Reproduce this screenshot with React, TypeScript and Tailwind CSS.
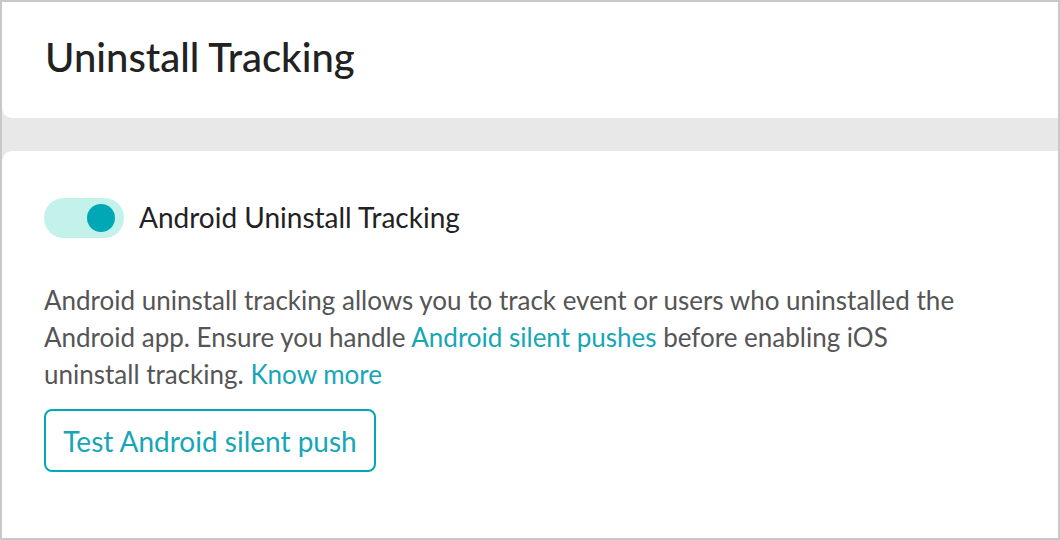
export default function App() {
  return (
    <div className="flex h-[540px] w-full flex-col overflow-hidden border-2 border-[#c8c8c8] bg-[#e8e8e8] font-['Lato',sans-serif]">
      <header className="flex h-[116px] shrink-0 items-center rounded-bl-[10px] bg-white pb-[6px] pl-[43px]">
        <h1 className="text-[40px] font-medium leading-none text-[#222222]">Uninstall Tracking</h1>
      </header>

      <section className="mt-[33px] flex-1 rounded-tl-[10px] bg-white pl-[42px] pt-[47px]">
        <div className="flex h-[40px] items-center gap-[15px]">
          <button
            type="button"
            aria-pressed="true"
            className="flex h-[40px] w-[80px] items-center justify-end rounded-full bg-[#c2f2ea] pr-[9px]"
          >
            <span className="h-[28px] w-[28px] rounded-full bg-[#00a7b5]" />
          </button>
          <span className="mb-[3px] text-[28px] leading-[34px] text-[#222222]">Android Uninstall Tracking</span>
        </div>

        <p className="mt-[44px] text-[26px] leading-[37px] text-[#555555]">
          Android uninstall tracking allows you to track event or users who uninstalled the
          <br />
          Android app. Ensure you handle <a className="text-[#16a6b6]" href="#">Android silent pushes</a> before enabling iOS
          <br />
          uninstall tracking. <a className="text-[#16a6b6]" href="#">Know more</a>
        </p>

        <button
          type="button"
          className="mt-[16px] h-[63px] w-[332px] rounded-[8px] border-2 border-[#00a7b5] text-[28px] text-[#16a6b6]"
        >
          Test Android silent push
        </button>
      </section>
    </div>
  );
}
